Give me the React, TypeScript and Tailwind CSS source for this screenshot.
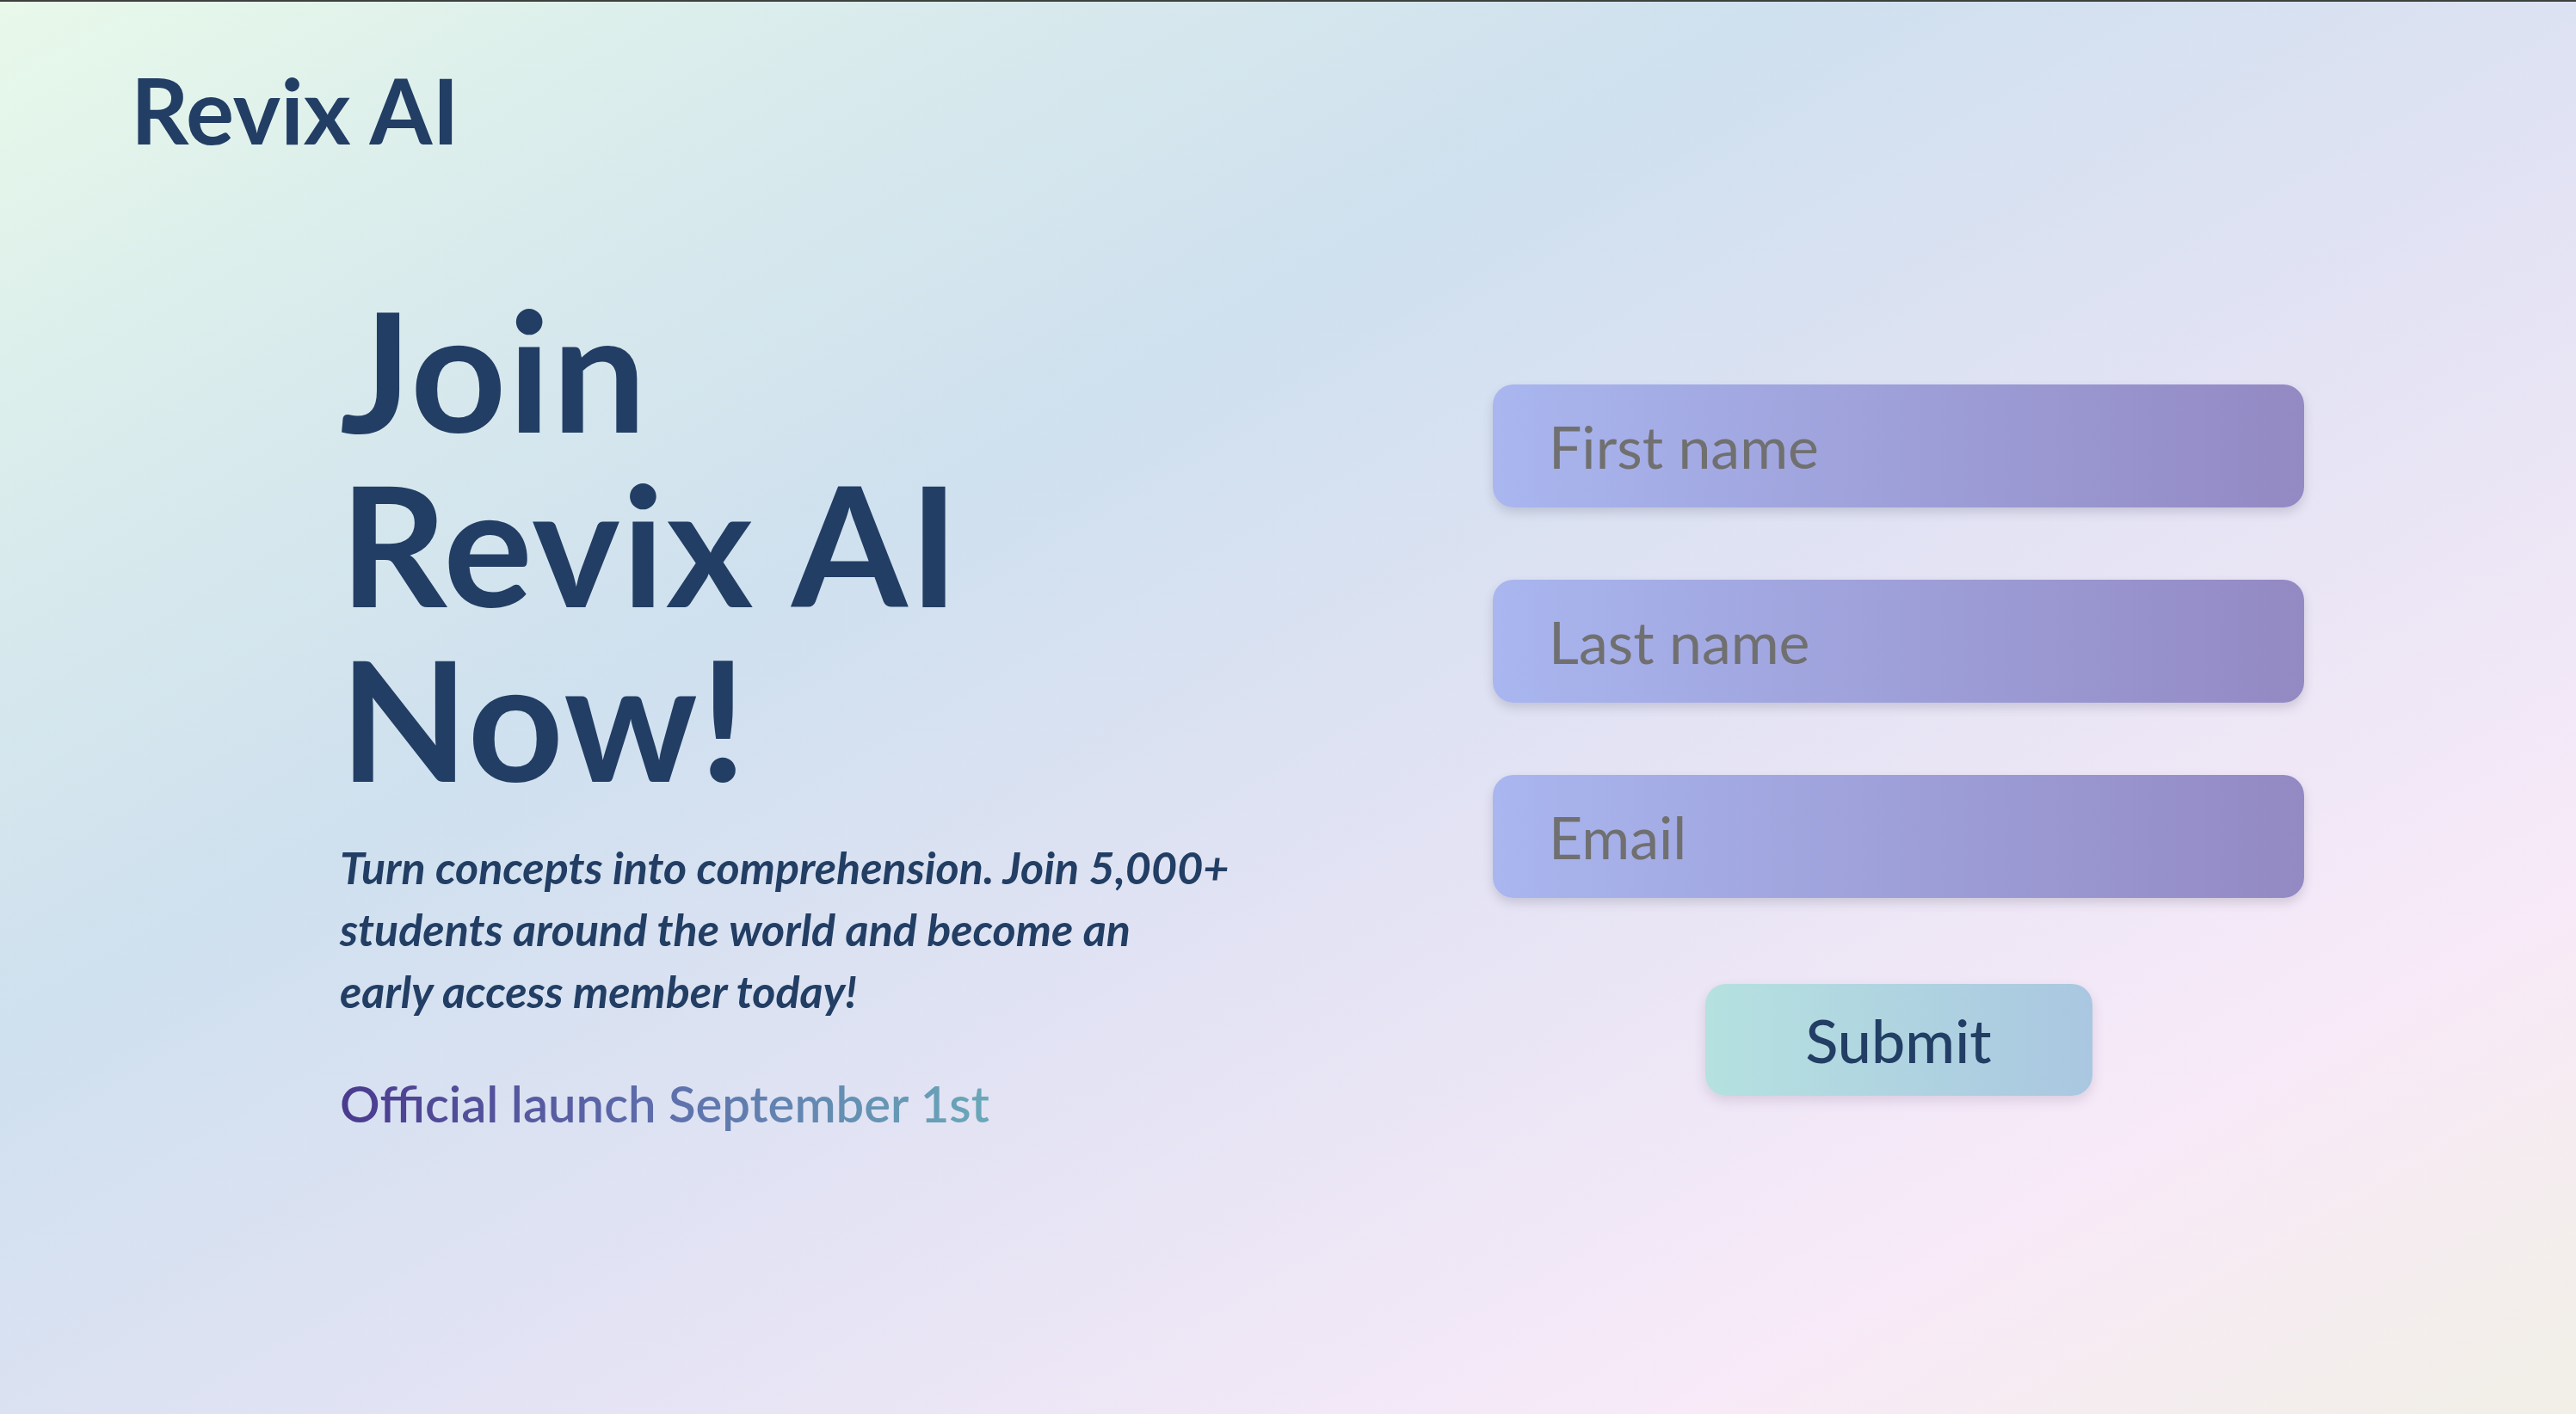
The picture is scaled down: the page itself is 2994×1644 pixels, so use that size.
export default function App() {
  return (
    <div className="min-h-screen w-full border-t-2 border-[#3d413d] bg-[linear-gradient(150deg,#e8f9ea_0%,#d9ebec_18%,#cfe0ef_36%,#e3e3f4_58%,#f8eaf8_82%,#f1efe6_100%)] font-['Lato','Liberation_Sans',sans-serif] text-[#223e64]">
      <header className="px-[152px] pt-[73px]">
        <div className="text-[105px] font-bold leading-none">Revix AI</div>
      </header>

      <main className="flex items-start pl-[395px] pr-[316px]">
        <section className="pt-[147px]">
          <h1 className="text-[194px] font-bold leading-[203px] tracking-[2px]">
            Join
            <br />
            Revix AI
            <br />
            Now!
          </h1>
          <p className="mt-[36px] text-[52px] font-bold italic leading-[72px]">
            Turn concepts into comprehension. Join 5,000+
            <br />
            students around the world and become an
            <br />
            early access member today!
          </p>
          <p className="mt-[60px] inline-block bg-[linear-gradient(90deg,#4a3a8e,#5e6fac_50%,#6aa8b8)] bg-clip-text text-[58px] font-semibold leading-[1.2] text-transparent">
            Official launch September 1st
          </p>
        </section>

        <section className="ml-auto flex w-[943px] flex-col items-center pt-[267px]">
          <form className="flex w-full flex-col items-center gap-[84px]">
            {["First name", "Last name", "Email"].map((label) => (
              <input
                key={label}
                type={label === "Email" ? "email" : "text"}
                placeholder={label}
                className="h-[143px] w-full rounded-[24px] bg-[linear-gradient(90deg,#a9b6ef,#9389c3)] pl-[65px] text-[68px] font-normal text-[#3a3a3a] shadow-[0_6px_12px_rgba(60,60,90,0.18)] outline-none placeholder:text-[#707070]"
              />
            ))}
            <button
              type="button"
              className="mt-[16px] h-[130px] w-[450px] rounded-[24px] bg-[linear-gradient(90deg,#b5e1e0,#aac7e1)] text-[70px] font-medium text-[#223e64] shadow-[0_6px_14px_rgba(90,70,110,0.16)]"
            >
              Submit
            </button>
          </form>
        </section>
      </main>
    </div>
  );
}
